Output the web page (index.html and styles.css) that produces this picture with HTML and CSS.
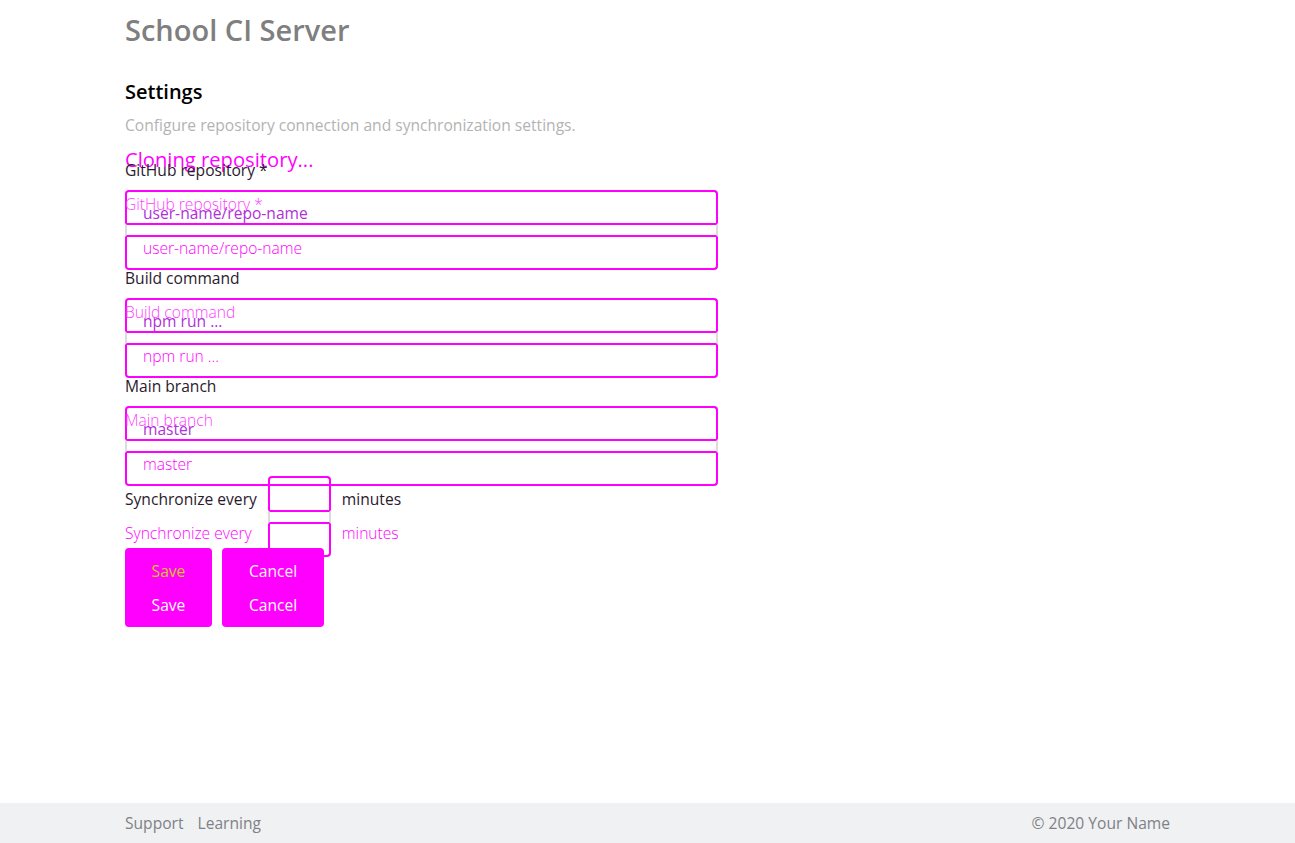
FILE: index.html
```html
<!DOCTYPE html>
<html lang="en">
<head>
<meta charset="utf-8">
<title>School CI Server</title>
<link rel="stylesheet" href="styles.css">
</head>
<body>
<main class="page">
  <h1 class="title">School CI Server</h1>
  <h2 class="heading">Settings</h2>
  <p class="desc">Configure repository connection and synchronization settings.</p>
  <p class="cloning">Cloning repository...</p>

  <div class="field">
    <div class="label">GitHub repository *</div>
    <div class="stack">
      <div class="seg seg-a">
        <div class="ghost-label">GitHub repository *</div>
        <div class="ph ph-a">user-name/repo-name</div>
      </div>
      <div class="seg seg-b"></div>
      <div class="seg seg-c"><div class="ph ph-c">user-name/repo-name</div></div>
    </div>
  </div>

  <div class="field">
    <div class="label">Build command</div>
    <div class="stack">
      <div class="seg seg-a">
        <div class="ghost-label">Build command</div>
        <div class="ph ph-a">npm run ...</div>
      </div>
      <div class="seg seg-b"></div>
      <div class="seg seg-c"><div class="ph ph-c">npm run ...</div></div>
    </div>
  </div>

  <div class="field">
    <div class="label">Main branch</div>
    <div class="stack">
      <div class="seg seg-a">
        <div class="ghost-label">Main branch</div>
        <div class="ph ph-a">master</div>
      </div>
      <div class="seg seg-b"></div>
      <div class="seg seg-c"><div class="ph ph-c">master</div></div>
    </div>
  </div>

  <div class="sync">
    <div class="sync-text">
      <div class="sync-line">Synchronize every</div>
      <div class="sync-line ghost">Synchronize every</div>
    </div>
    <div class="stack stack-small">
      <div class="seg seg-a small-a"></div>
      <div class="seg seg-b"></div>
      <div class="seg seg-c small-c"></div>
    </div>
    <div class="sync-text">
      <div class="sync-line">minutes</div>
      <div class="sync-line ghost">minutes</div>
    </div>
  </div>

  <div class="actions">
    <div class="btn btn-save">
      <span class="btn-t1">Save</span>
      <span class="btn-t2">Save</span>
    </div>
    <div class="btn btn-cancel">
      <span class="btn-t1">Cancel</span>
      <span class="btn-t2">Cancel</span>
    </div>
  </div>
</main>
<footer class="footer">
  <nav class="footer-links">
    <span>Support</span>
    <span>Learning</span>
  </nav>
  <span>© 2020 Your Name</span>
</footer>
</body>
</html>
```

FILE: styles.css
```css
* { box-sizing: border-box; }
html, body { margin: 0; padding: 0; }
body {
  font-family: "Open Sans", "Noto Sans", sans-serif;
  background: #fff;
  min-height: 843px;
  display: flex;
  flex-direction: column;
}
.page {
  padding: 0 125px;
  flex: 1;
}
.title {
  margin: 0;
  padding-top: 13px;
  font-size: 29px;
  line-height: 34px;
  font-weight: 600;
  color: #7f7f80;
}
.heading {
  margin: 33px 0 0;
  font-size: 20px;
  line-height: 24px;
  font-weight: 600;
  color: #000;
}
.desc {
  margin: 11px 0 0;
  font-size: 15.6px;
  line-height: 20px;
  color: #b3b3b3;
}
.cloning {
  margin: 13px 0 0;
  font-size: 20.2px;
  line-height: 22px;
  color: #ff00ff;
}
.field { display: flex; flex-direction: column; }
.cloning + .field { margin-top: -8px; }
.label {
  font-size: 15.6px;
  line-height: 16px;
  color: #2a1a2e;
  margin-bottom: 12px;
}
.stack {
  width: 593px;
  display: flex;
  flex-direction: column;
}
.seg-a {
  height: 33px;
  border: 2px solid #ff00ff;
  border-bottom: 0;
  border-radius: 4px 4px 0 0;
}
.seg-b {
  height: 14px;
  border-top: 2px solid #ff00ff;
  border-bottom: 2px solid #ff00ff;
  border-left: 2px solid #dcdcdc;
  border-right: 2px solid #dcdcdc;
}
.seg-c {
  height: 33px;
  border: 2px solid #ff00ff;
  border-top: 0;
  border-radius: 0 0 4px 4px;
}
.ghost-label {
  margin: 5px 0 0 -2px;
  font-size: 15.6px;
  line-height: 14px;
  color: #ff40ff;
  font-weight: 300;
}
.ph {
  padding-left: 16px;
  font-size: 15.6px;
  line-height: 14px;
}
.ph-a { margin-top: -5px; color: #b030d8; }
.ph-c { padding-top: 4px; color: #ff00ff; font-weight: 300; }

.sync {
  display: flex;
  gap: 11px;
  margin-top: -10px;
  align-items: flex-start;
}
.sync-text {
  padding-top: 16px;
  display: flex;
  flex-direction: column;
  gap: 20px;
}
.sync-line {
  font-size: 15.6px;
  line-height: 14px;
  color: #2a1a2e;
}
.sync-line.ghost { color: #ff00ff; font-weight: 300; }
.stack-small { width: 63px; }
.small-a { height: 34px; }
.small-c { height: 33px; }

.actions {
  display: flex;
  gap: 10px;
  margin-top: -9px;
}
.btn {
  height: 79px;
  background: #ff00ff;
  border-radius: 4px;
  display: flex;
  flex-direction: column;
  align-items: center;
  padding-top: 16px;
  gap: 20px;
  font-size: 15.6px;
  line-height: 14px;
}
.btn-save { width: 87px; }
.btn-cancel { width: 102px; }
.btn-save .btn-t1 { color: #d6c820; }
.btn-cancel .btn-t1 { color: #f4f4f4; }
.btn-t2 { color: #fff; }

.footer {
  height: 40px;
  background: #f0f1f3;
  padding: 0 125px;
  display: flex;
  align-items: center;
  justify-content: space-between;
  font-size: 15.6px;
  color: #7f8185;
}
.footer-links { display: flex; gap: 14px; }
```
